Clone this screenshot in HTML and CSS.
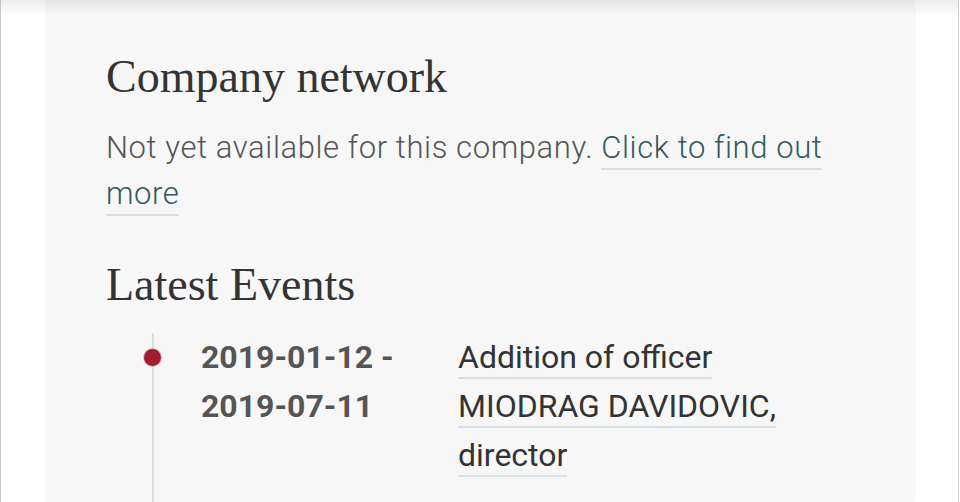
FILE: index.html
```html
<!DOCTYPE html>
<html lang="en">
<head>
<meta charset="utf-8">
<title>Company network</title>
<link rel="stylesheet" href="styles.css">
</head>
<body>
<div class="page">
  <div class="shade"></div>
  <main class="card">
    <h2 class="title">Company network</h2>
    <p class="note"><span class="note-text">Not yet available for this company.</span> <a class="link" href="#">Click to find out more</a></p>
    <h2 class="title events-title">Latest Events</h2>
    <ul class="timeline">
      <li class="event">
        <span class="dot"></span>
        <div class="date">2019-01-12 - 2019-07-11</div>
        <div class="desc"><a class="desc-link" href="#">Addition of officer MIODRAG DAVIDOVIC, director</a></div>
      </li>
    </ul>
  </main>
</div>
</body>
</html>
```

FILE: styles.css
```css
html, body {
  margin: 0;
  padding: 0;
  height: 100%;
  overflow: hidden;
  background: #ffffff;
}

.page {
  position: relative;
  box-sizing: border-box;
  height: 100%;
  border-left: 1px solid #c4c4c4;
  border-right: 1px solid #cfcfcf;
  margin-right: 1px;
  padding: 0 44px 0 46px;
  background: #ffffff;
}

.shade {
  position: absolute;
  left: 0;
  right: 0;
  top: 0;
  height: 16px;
  background: linear-gradient(to bottom, rgba(0,0,0,0.07), rgba(0,0,0,0));
  pointer-events: none;
}

.card {
  box-sizing: border-box;
  height: 100%;
  display: flex;
  flex-direction: column;
  overflow: hidden;
  background: #f7f7f7;
  box-shadow: 0 0 3px rgba(0,0,0,0.10);
  padding: 49px 59px 0 59px;
}

.title {
  margin: 0;
  font-family: "Liberation Serif", "DejaVu Serif", serif;
  font-weight: normal;
  font-size: 46px;
  line-height: 55px;
  color: #333333;
}

.note {
  margin: 21px 0 0 0;
  font-family: Roboto, "Liberation Sans", sans-serif;
  font-weight: 300;
  font-size: 31px;
  letter-spacing: 0.6px;
  line-height: 46px;
  color: #555555;
}

.link {
  color: #2f5a5f;
  text-decoration: none;
  padding-bottom: 2px;
  border-bottom: 2px solid #d6e1e4;
}

.events-title {
  margin-top: 40px;
}

.timeline {
  flex: 1;
  list-style: none;
  margin: 21px 0 0 46px;
  padding: 0;
  border-left: 2px solid #dddddd;
}

.event {
  position: relative;
  display: grid;
  grid-template-columns: 257px 1fr;
  padding-left: 47px;
  font-family: Roboto, "Liberation Sans", sans-serif;
  font-size: 32px;
  line-height: 49px;
}

.dot {
  position: absolute;
  left: -10px;
  top: 16px;
  width: 17px;
  height: 17px;
  border-radius: 50%;
  background: #a01d2d;
  box-shadow: 0 0 0 1px rgba(160,29,45,0.25);
}

.date {
  font-weight: 700;
  color: #555555;
  width: 205px;
}

.desc {
  font-weight: 400;
  color: #333333;
}

.desc-link {
  color: #333333;
  text-decoration: none;
  padding-bottom: 1px;
  border-bottom: 2px solid #d6e1e4;
}
```
